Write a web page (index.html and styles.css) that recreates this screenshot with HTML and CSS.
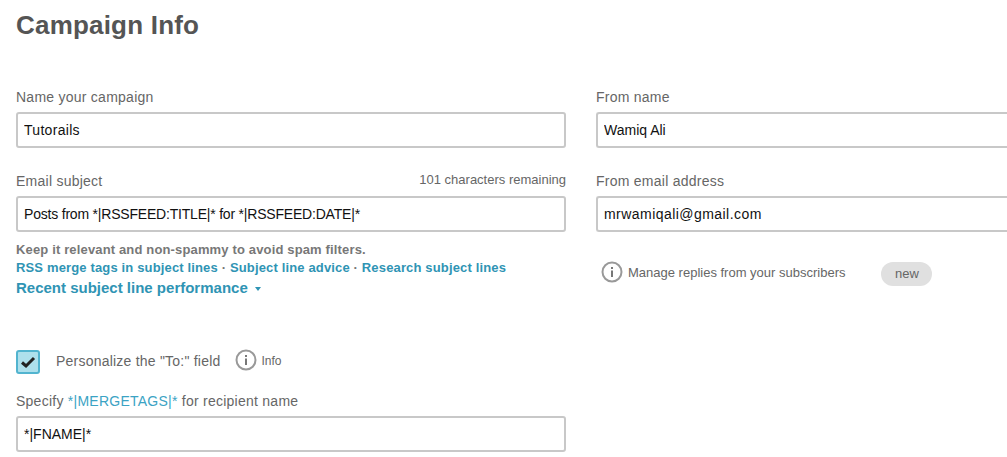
FILE: index.html
```html
<!DOCTYPE html>
<html lang="en">
<head>
    <meta charset="UTF-8">
    <title>Campaign Info</title>
    <link rel="stylesheet" href="styles.css">
</head>
<body>
    <h1>Campaign Info</h1>
    <div class="columns">
        <div class="col">
            <div class="form-group">
                <label class="field-label">Name your campaign</label>
                <input class="text-input name-input" type="text" value="Tutorails">
            </div>
            <div class="form-group subject-group">
                <div class="label-row">
                    <label class="field-label">Email subject</label>
                    <span class="remaining">101 characters remaining</span>
                </div>
                <input class="text-input subject-input" type="text" value="Posts from *|RSSFEED:TITLE|* for *|RSSFEED:DATE|*">
            </div>
            <p class="hint">Keep it relevant and non-spammy to avoid spam filters.</p>
            <p class="links"><a href="#">RSS merge tags in subject lines</a> · <a href="#">Subject line advice</a> · <a href="#">Research subject lines</a></p>
            <p class="recent"><a href="#">Recent subject line performance</a><span class="caret"></span></p>

            <div class="check-row">
                <span class="checkbox">
                    <svg width="16" height="14" viewBox="0 0 16 14"><path d="M2 7.5 L6 11 L14 3" fill="none" stroke="#222" stroke-width="3"/></svg>
                </span>
                <span class="check-label">Personalize the "To:" field</span>
                <svg class="info" width="22" height="22" viewBox="0 0 22 22"><circle cx="11" cy="11" r="9.5" fill="none" stroke="#999" stroke-width="2"/><rect x="10" y="9.5" width="2" height="6.5" fill="#777"/><rect x="10" y="6" width="2" height="2" fill="#777"/></svg>
                <span class="info-text">Info</span>
            </div>
            <div class="form-group">
                <label class="field-label">Specify <a href="#" class="tag-link">*|MERGETAGS|*</a> for recipient name</label>
                <input class="text-input" type="text" value="*|FNAME|*">
            </div>
        </div>
        <div class="col col-right">
            <div class="form-group">
                <label class="field-label">From name</label>
                <input class="text-input" type="text" value="Wamiq Ali">
            </div>
            <div class="form-group">
                <label class="field-label">From email address</label>
                <input class="text-input email-input" type="text" value="mrwamiqali@gmail.com">
            </div>
            <div class="replies">
                <svg class="info" width="22" height="22" viewBox="0 0 22 22"><circle cx="11" cy="11" r="9.5" fill="none" stroke="#999" stroke-width="2"/><rect x="10" y="9.5" width="2" height="6.5" fill="#777"/><rect x="10" y="6" width="2" height="2" fill="#777"/></svg>
                <span class="replies-text">Manage replies from your subscribers</span>
                <span class="badge">new</span>
            </div>
        </div>
    </div>
</body>
</html>
```

FILE: styles.css
```css
html, body {
    overflow: hidden;
}

body {
    font-family: "Liberation Sans", Arial, sans-serif;
    background-color: #fff;
    margin: 0;
    padding: 0 0 0 16px;
    color: #666;
    width: 1007px;
    height: 457px;
    box-sizing: border-box;
}

h1 {
    font-size: 26px;
    line-height: 30px;
    font-weight: bold;
    letter-spacing: 0.2px;
    color: #555;
    margin: 0;
    padding-top: 10px;
}

a {
    color: #2f94b4;
    text-decoration: none;
}

p {
    margin: 0;
}

.columns {
    display: flex;
    gap: 30px;
    margin-top: 47px;
}

.col {
    width: 550px;
    flex: none;
}

/* right column is cut off by the window edge */
.col-right {
    width: 411px;
}

.col-right .text-input {
    border-right: none;
    border-radius: 3px 0 0 3px;
}

.form-group {
    margin-bottom: 23px;
}

.subject-group {
    margin-bottom: 9px;
}

.field-label {
    display: block;
    font-size: 14px;
    line-height: 20px;
    letter-spacing: 0.25px;
    margin-bottom: 5px;
}

.tag-link {
    color: #3ba3c4;
}

.label-row {
    display: flex;
    justify-content: space-between;
}

.remaining {
    font-size: 13px;
    line-height: 18px;
}

.text-input {
    display: block;
    width: 100%;
    height: 36px;
    box-sizing: border-box;
    padding: 0 6px;
    border: 2px solid #c8c8c8;
    border-radius: 3px;
    font-family: inherit;
    font-size: 14px;
    color: #111;
}

.name-input {
    letter-spacing: 0.3px;
}

.subject-input {
    letter-spacing: -0.2px;
}

.email-input {
    letter-spacing: 0.45px;
}

.hint,
.links {
    font-size: 13px;
    font-weight: bold;
    line-height: 18px;
    letter-spacing: 0.15px;
    color: #777;
}

.recent {
    font-size: 15px;
    font-weight: bold;
    line-height: 20px;
    margin-top: 1px;
}

.caret {
    display: inline-block;
    margin-left: 7px;
    vertical-align: 2px;
    border-left: 3px solid transparent;
    border-right: 3px solid transparent;
    border-top: 4px solid #2f94b4;
}

.check-row {
    display: flex;
    align-items: center;
    margin-top: 52px;
    height: 24px;
    margin-bottom: 17px;
}

.checkbox {
    width: 24px;
    height: 24px;
    box-sizing: border-box;
    border: 2px solid #52b4cf;
    border-radius: 3px;
    background-color: #aee0ec;
    display: flex;
    align-items: center;
    justify-content: center;
}

.check-label {
    font-size: 14px;
    letter-spacing: 0.22px;
    margin-left: 16px;
    margin-right: 15px;
    margin-bottom: 2px;
}

.info {
    flex: none;
}

.check-row .info {
    margin-bottom: 4px;
    margin-left: -1px;
}

.info-text {
    font-size: 12px;
    margin-left: 5px;
    margin-bottom: 3px;
}

.replies {
    display: flex;
    align-items: center;
    margin-top: 26px;
    padding-left: 5px;
}

.replies-text {
    font-size: 13px;
    margin-left: 5px;
}

.badge {
    margin-left: 36px;
    margin-top: 4px;
    width: 51px;
    height: 24px;
    line-height: 24px;
    text-align: center;
    border-radius: 12px;
    background-color: #e0e0e0;
    font-size: 13px;
    color: #666;
}
```
